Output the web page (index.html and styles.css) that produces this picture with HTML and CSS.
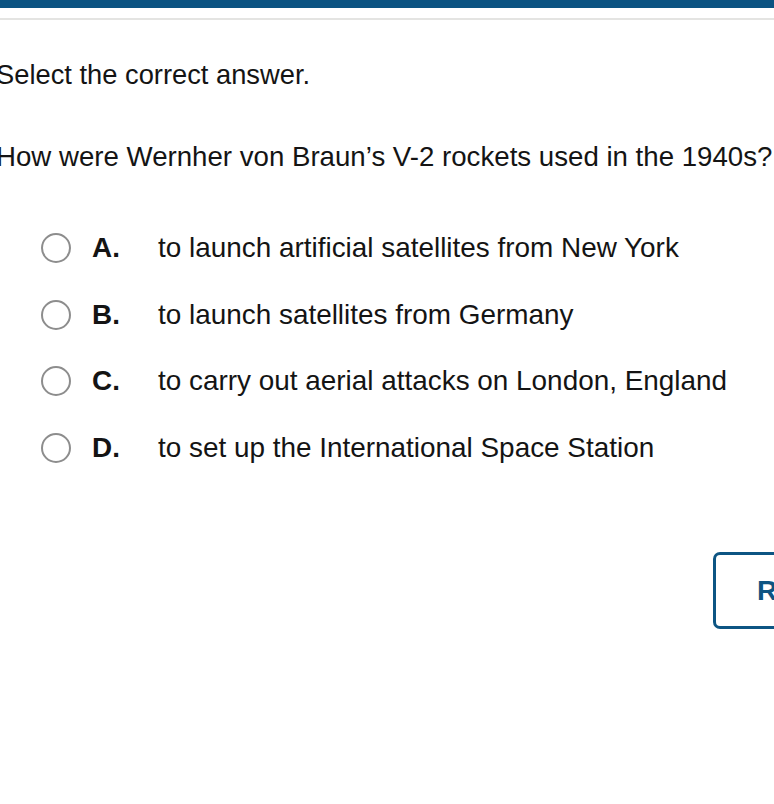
FILE: index.html
```html
<!DOCTYPE html>
<html lang="en">
<head>
<meta charset="utf-8">
<title>Question</title>
<link rel="stylesheet" href="styles.css">
</head>
<body>
<div class="topbar"></div>
<div class="divider"></div>
<main class="main">
  <p class="instruction">Select the correct answer.</p>
  <p class="question">How were Wernher von Braun’s V-2 rockets used in the 1940s?</p>
  <ul class="options">
    <li class="option"><span class="radio"></span><span class="letter">A.</span><span class="text">to launch artificial satellites from New York</span></li>
    <li class="option"><span class="radio"></span><span class="letter">B.</span><span class="text">to launch satellites from Germany</span></li>
    <li class="option"><span class="radio"></span><span class="letter">C.</span><span class="text">to carry out aerial attacks on London, England</span></li>
    <li class="option"><span class="radio"></span><span class="letter">D.</span><span class="text">to set up the International Space Station</span></li>
  </ul>
  <div class="actions">
    <button class="btn">Reset</button>
  </div>
</main>
</body>
</html>
```
FILE: styles.css
```css
html, body {
  margin: 0;
  padding: 0;
  background: #ffffff;
  overflow: hidden;
}
body {
  font-family: "Liberation Sans", Arial, sans-serif;
  color: #141414;
  width: 774px;
  height: 804px;
}
.topbar {
  height: 8px;
  background: #0b5382;
}
.divider {
  margin-top: 10px;
  height: 2px;
  background: #e4e4e2;
}
.main {
  margin-left: -4px;
  width: 900px;
}
.instruction {
  margin: 39px 0 0 0;
  font-size: 27.3px;
  line-height: 32px;
}
.question {
  margin: 50px 0 0 0;
  font-size: 27.65px;
  line-height: 32px;
  white-space: nowrap;
}
.options {
  list-style: none;
  margin: 59px 0 0 0;
  padding: 0 0 0 44.5px;
  display: flex;
  flex-direction: column;
  gap: 34.7px;
}
.option {
  display: flex;
  align-items: center;
  height: 32px;
  font-size: 27.9px;
}
.radio {
  box-sizing: border-box;
  width: 30px;
  height: 30px;
  border: 2.5px solid #8d8d8d;
  border-radius: 50%;
  flex: none;
}
.letter {
  font-weight: bold;
  width: 66px;
  margin-left: 21.5px;
  flex: none;
}
.text {
  white-space: nowrap;
}
.actions {
  display: flex;
  margin-top: 88px;
  padding-left: 717px;
}
.btn {
  box-sizing: border-box;
  height: 77px;
  width: 170px;
  border: 3px solid #0d5583;
  border-radius: 7px;
  background: #ffffff;
  color: #0d5583;
  font-family: "Liberation Sans", Arial, sans-serif;
  font-weight: bold;
  font-size: 28px;
  text-align: left;
  padding: 0 0 0 41px;
}
```
